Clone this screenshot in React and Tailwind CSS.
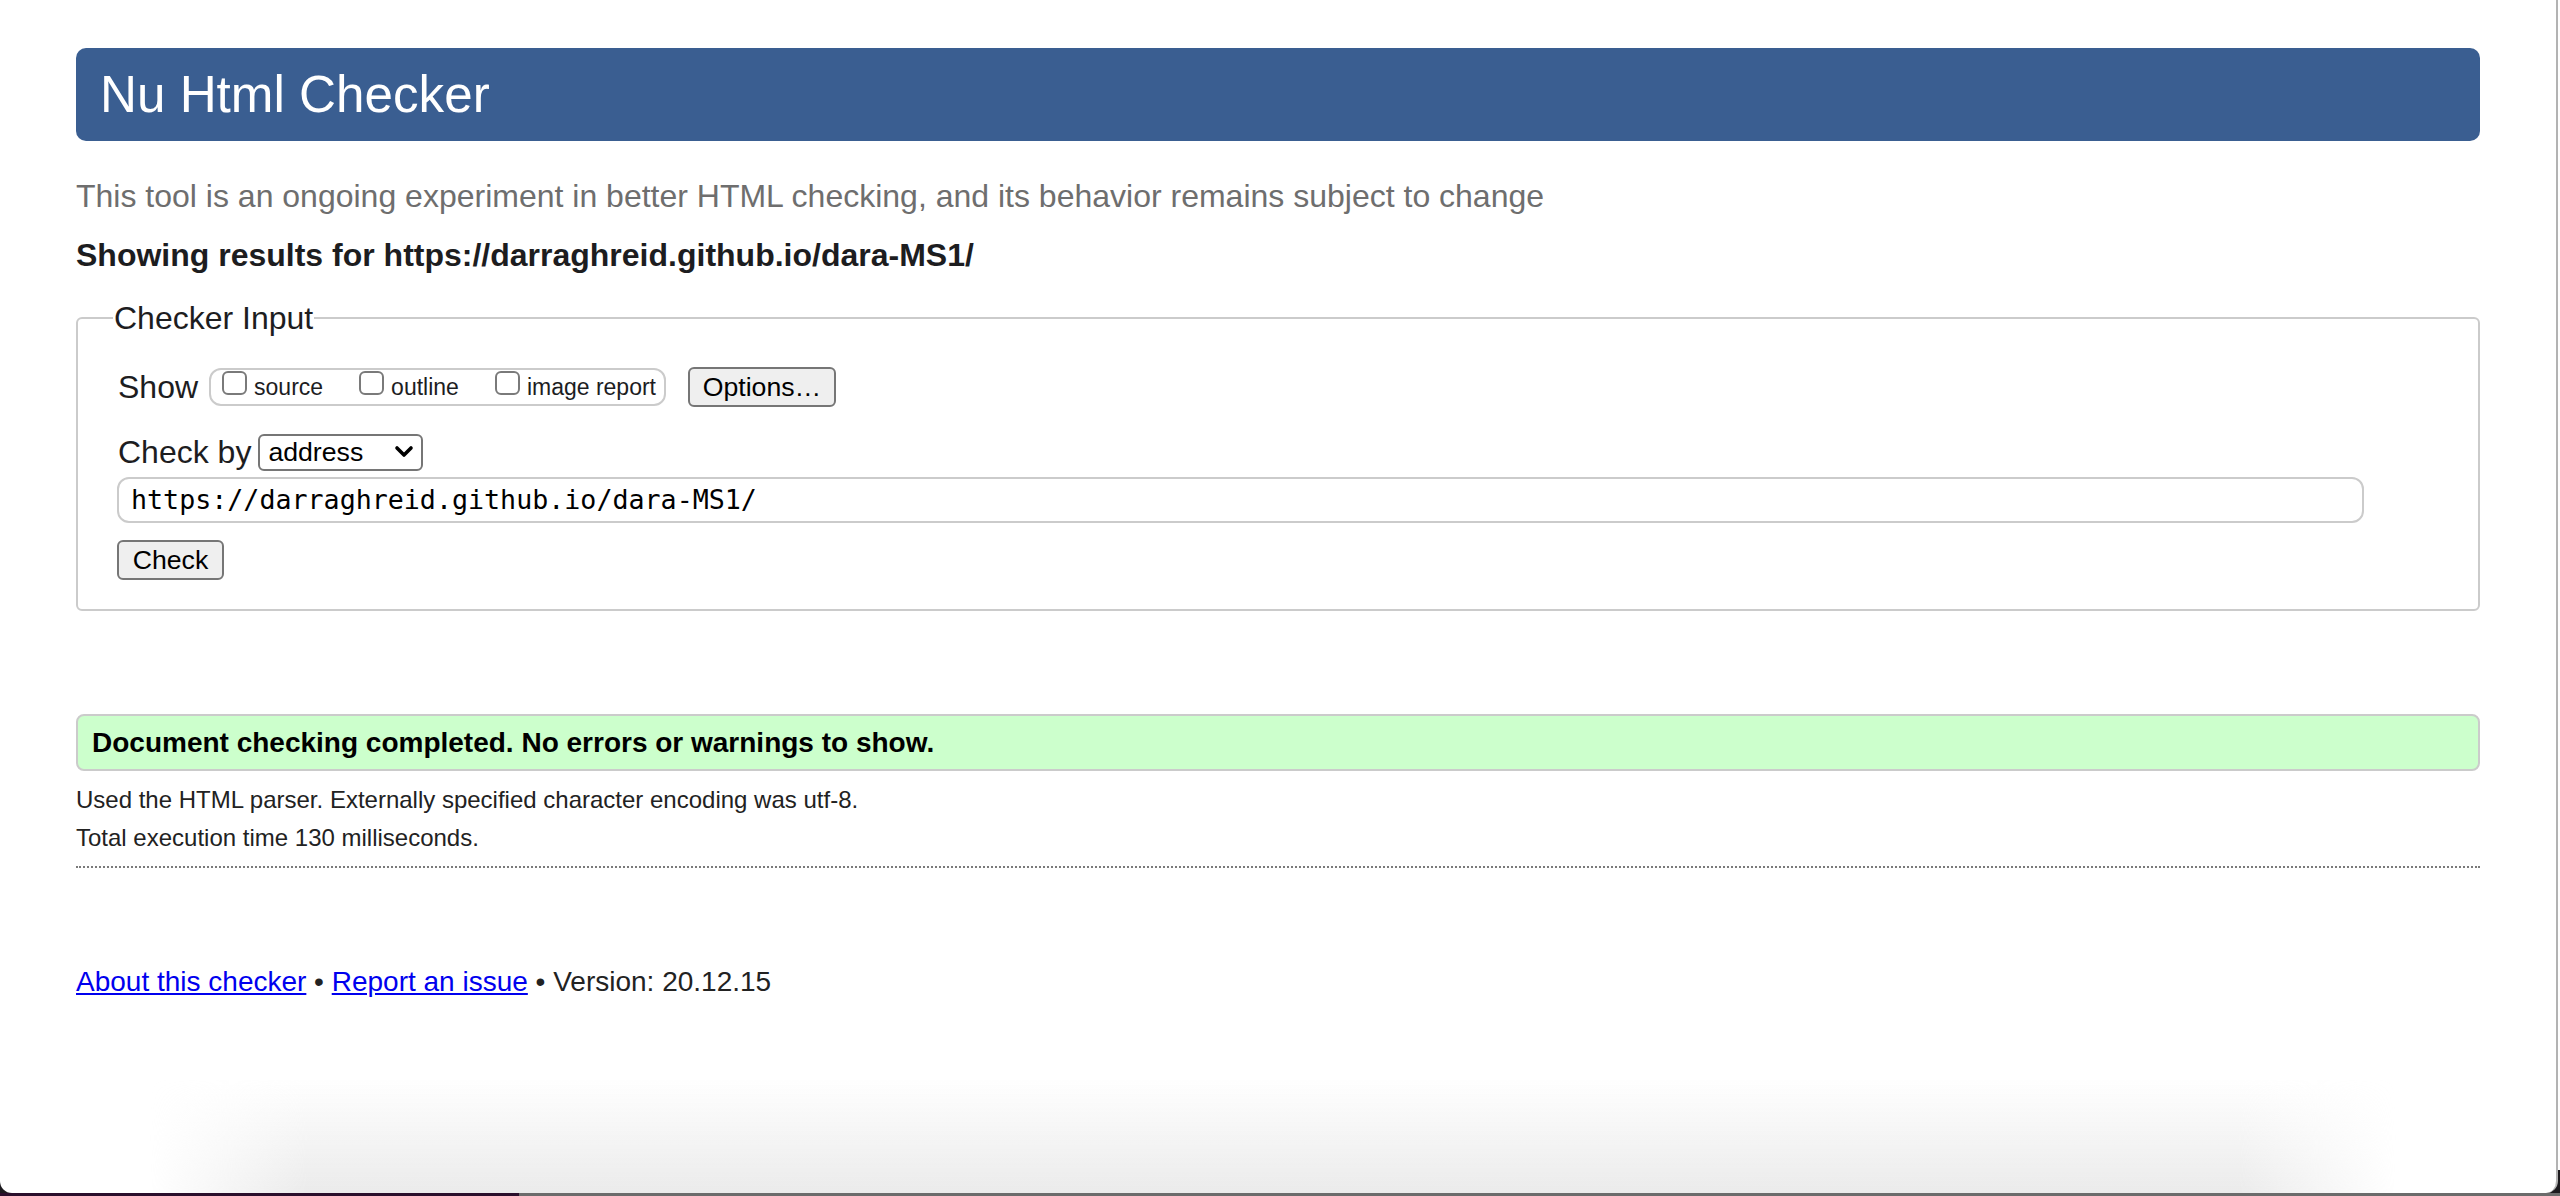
import React from "react";

function Checkbox() {
  return <span className="inline-block w-[25px] h-[24px] border-2 border-[#7a7a7a] rounded-[6px] bg-white shrink-0" />;
}

function CheckLabel({ text }) {
  return (
    <label className="flex items-baseline">
      <Checkbox />
      <span className="ml-[7px] text-[23px] leading-[34px] text-[#1d1d1f]">{text}</span>
    </label>
  );
}

export default function App() {
  return (
    <div className="w-[2560px] h-[1196px] overflow-hidden flex flex-col bg-[linear-gradient(to_bottom,#ffffff_0,#ffffff_1170px,#1c1a1e_1170px)] font-['Liberation_Sans',Arial,sans-serif] text-[#222]">
      <div className="relative w-[2558px] h-[1193px] bg-white rounded-b-[12px] border-r-2 border-[#b3b3b3] overflow-hidden">
        <div className="absolute left-[150px] right-[160px] bottom-0 h-[115px] bg-[linear-gradient(to_top,#ebebeb,rgba(255,255,255,0))] [mask-image:linear-gradient(to_right,transparent,black_7%,black_93%,transparent)]" />
        <main className="relative px-[76px] pt-[48px]">
          <h1 className="bg-[#3a5e91] text-white text-[51.2px] leading-[59px] py-[17px] pl-[24px] rounded-[10px] font-normal">
            Nu Html Checker
          </h1>
          <p className="mt-[35px] text-[32px] leading-[40px] text-[#6e6e6e]">
            This tool is an ongoing experiment in better HTML checking, and its behavior remains subject to change
          </p>
          <p className="mt-[19px] text-[32px] leading-[40px] font-bold text-[#1d1d1f]">
            Showing results for https://darraghreid.github.io/dara-MS1/
          </p>
          <fieldset className="mt-[23px] border-2 border-[#cbcbcb] rounded-[6px] pl-[35px] pb-[29px]">
            <legend className="px-[1px] text-[32px] leading-[40px] text-[#1d1d1f]">Checker Input</legend>
            <div className="ml-[5px] mt-[29px] h-[40px] flex items-center">
              <span className="text-[32px] leading-[40px] text-[#1d1d1f]">Show</span>
              <div className="ml-[11px] h-[38px] border-2 border-[#cbcbcb] rounded-[12px] pl-[11px] pr-[8px] flex items-start gap-[36px]">
                <CheckLabel text="source" />
                <CheckLabel text="outline" />
                <CheckLabel text="image report" />
              </div>
              <button className="ml-[22px] w-[148px] h-[40px] border-2 border-[#767676] rounded-[6px] bg-[#efefef] text-[26.67px] leading-[30px] text-black">
                Options…
              </button>
            </div>
            <div className="ml-[5px] mt-[26px] h-[38px] flex items-center">
              <span className="text-[32px] leading-[40px] text-[#1d1d1f]">Check by</span>
              <div className="ml-[7px] w-[165px] h-[37px] border-2 border-[#767676] rounded-[6px] bg-white flex items-center justify-between pl-[8px] pr-[7px] text-[26.67px] text-black">
                <span>address</span>
                <svg width="20" height="14" viewBox="0 0 20 14" className="shrink-0">
                  <polyline points="3,3 10,10 17,3" fill="none" stroke="#000" strokeWidth="3.6" strokeLinecap="round" strokeLinejoin="round" />
                </svg>
              </div>
            </div>
            <div className="ml-[4px] mt-[6px] w-[2247px] h-[46px] border-2 border-[#cbcbcb] rounded-[12px] pl-[12px] flex items-center font-['DejaVu_Sans_Mono',monospace] text-[26.67px] text-black">
              https://darraghreid.github.io/dara-MS1/
            </div>
            <button className="ml-[4px] mt-[17px] w-[107px] h-[40px] border-2 border-[#767676] rounded-[6px] bg-[#efefef] text-[26.67px] leading-[30px] text-black block">
              Check
            </button>
          </fieldset>
          <div className="mt-[103px] h-[57px] border-2 border-[#cbcbcb] bg-[#ccffcc] rounded-[8px] pl-[14px] flex items-center text-[28px] font-bold text-black">
            Document checking completed. No errors or warnings to show.
          </div>
          <p className="mt-[13px] text-[24px] leading-[32px] text-[#222]">
            Used the HTML parser. Externally specified character encoding was utf-8.
          </p>
          <p className="mt-[6px] text-[24px] leading-[32px] text-[#222]">Total execution time 130 milliseconds.</p>
          <div className="mt-[12px] border-t-2 border-dotted border-[#7a7a7a]" />
          <p className="mt-[96px] text-[28px] leading-[36px] text-[#222]">
            <a className="text-[#0000ee] underline">About this checker</a> • <a className="text-[#0000ee] underline">Report an issue</a> • Version: 20.12.15
          </p>
        </main>
      </div>
      <div className="flex h-[3px]">
        <div className="w-[519px] bg-[#2b0f2c]" />
        <div className="flex-1 bg-[#6b6b6b]" />
      </div>
    </div>
  );
}
